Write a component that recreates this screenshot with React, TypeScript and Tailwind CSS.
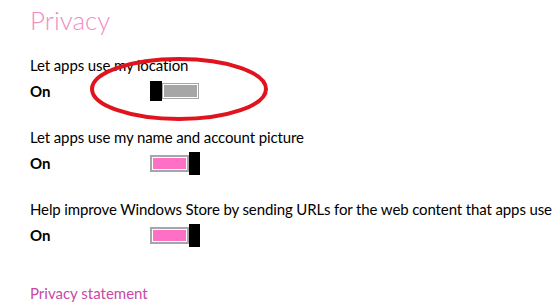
import React from "react";

function Toggle({ on }: { on: boolean }) {
  return (
    <div className="flex items-center h-[23px] w-[50px]">
      {on ? (
        <>
          <div className="h-[17px] w-[39px] border-2 border-[#a6a6a6] bg-white p-px">
            <div className="h-full w-full bg-[#ff6fc6]" />
          </div>
          <div className="h-[23px] w-[11px] bg-black" />
        </>
      ) : (
        <>
          <div className="h-[20px] w-[12px] bg-black" />
          <div className="h-[16px] w-[37px] border border-[#a6a6a6] bg-white p-px">
            <div className="h-full w-full bg-[#a6a6a6]" />
          </div>
        </>
      )}
    </div>
  );
}

function Setting({ label, on }: { label: string; on: boolean }) {
  return (
    <div className="flex flex-col">
      <p className="whitespace-nowrap text-[15px] leading-[20px] tracking-[-0.12px] text-black">{label}</p>
      <div className="flex items-center h-[32px]">
        <span className="w-[120px] text-[15px] font-bold text-black">On</span>
        <Toggle on={on} />
      </div>
    </div>
  );
}

export default function App() {
  return (
    <div
      className="relative w-[552px] h-[307px] bg-white overflow-hidden pl-[30px]"
      style={{ fontFamily: 'Lato, "Noto Sans", sans-serif' }}
    >
      <h1 className="pt-[2px] text-[26px] font-light leading-[36px] text-[#f28cc4]">Privacy</h1>
      <div className="mt-[17px] flex flex-col gap-[20px]">
        <Setting label="Let apps use my location" on={false} />
        <Setting label="Let apps use my name and account picture" on={true} />
        <Setting label="Help improve Windows Store by sending URLs for the web content that apps use" on={true} />
      </div>
      <a className="mt-[32px] block text-[15px] leading-[20px] text-[#c948a6]">Privacy statement</a>

      <svg className="absolute left-[89px] top-[55px]" width="180" height="68" viewBox="0 0 180 68">
        <ellipse cx="90" cy="34" rx="87" ry="30" fill="none" stroke="#e0141e" strokeWidth="4" />
      </svg>
    </div>
  );
}
